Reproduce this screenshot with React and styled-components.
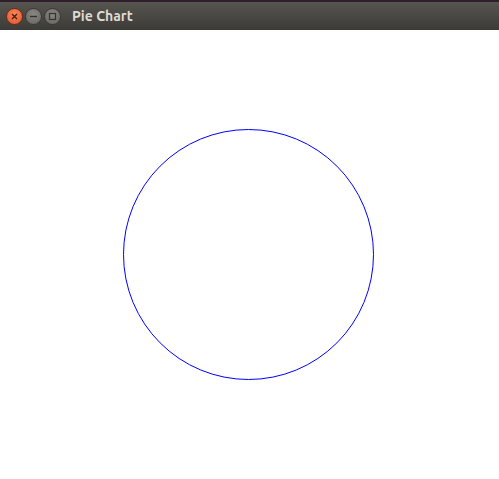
import React from "react";
import styled, { createGlobalStyle } from "styled-components";

const Global = createGlobalStyle`
  html, body {
    margin: 0;
    padding: 0;
    background: #ffffff;
  }
`;

function App() {
  return (
    <Window>
      <Global />
      <TopStrip />
      <TitleBar>
        <Controls>
          <WinButton kind="close">
            <svg width="9" height="9" viewBox="0 0 9 9">
              <path d="M2 2 L7 7 M7 2 L2 7" stroke="#4a1d10" strokeWidth="1.4" />
            </svg>
          </WinButton>
          <WinButton>
            <svg width="9" height="9" viewBox="0 0 9 9">
              <path d="M1 4.5 H8" stroke="#33322e" strokeWidth="1.4" />
            </svg>
          </WinButton>
          <WinButton>
            <svg width="9" height="9" viewBox="0 0 9 9">
              <rect x="1.5" y="1.5" width="6" height="6" fill="none" stroke="#33322e" strokeWidth="1.2" />
            </svg>
          </WinButton>
        </Controls>
        <Title>Pie Chart</Title>
      </TitleBar>
      <Canvas>
        <svg width="499" height="449" viewBox="0 0 499 449">
          <circle cx="248.5" cy="224.5" r="125" fill="none" stroke="#0000ff" strokeWidth="1" />
        </svg>
      </Canvas>
    </Window>
  );
}

export default App;

const Window = styled.div`
  width: 499px;
  height: 479px;
  display: flex;
  flex-direction: column;
  background: #ffffff;
  overflow: hidden;
`;

const TopStrip = styled.div`
  height: 2px;
  background: #2e1f2b;
`;

const TitleBar = styled.div`
  height: 28px;
  display: flex;
  align-items: center;
  padding: 0 0 0 6px;
  background: linear-gradient(#57554f, #3c3b37);
`;

const Controls = styled.div`
  display: flex;
  gap: 2px;
  margin-right: 11px;
`;

const WinButton = styled.div`
  width: 17px;
  height: 17px;
  border-radius: 50%;
  display: flex;
  align-items: center;
  justify-content: center;
  box-sizing: border-box;
  background: ${({ kind }) =>
    kind === "close"
      ? "radial-gradient(circle at 50% 35%, #f7875a, #e0532a)"
      : "radial-gradient(circle at 50% 35%, #8a8781, #66645f)"};
  border: 1px solid ${({ kind }) => (kind === "close" ? "#6e2a16" : "#3a3935")};
`;

const Title = styled.div`
  font-family: "Ubuntu", "Noto Sans", "DejaVu Sans", sans-serif;
  font-weight: bold;
  font-size: 14px;
  color: #dfdbd2;
`;

const Canvas = styled.div`
  flex: 1;
  display: flex;
`;
